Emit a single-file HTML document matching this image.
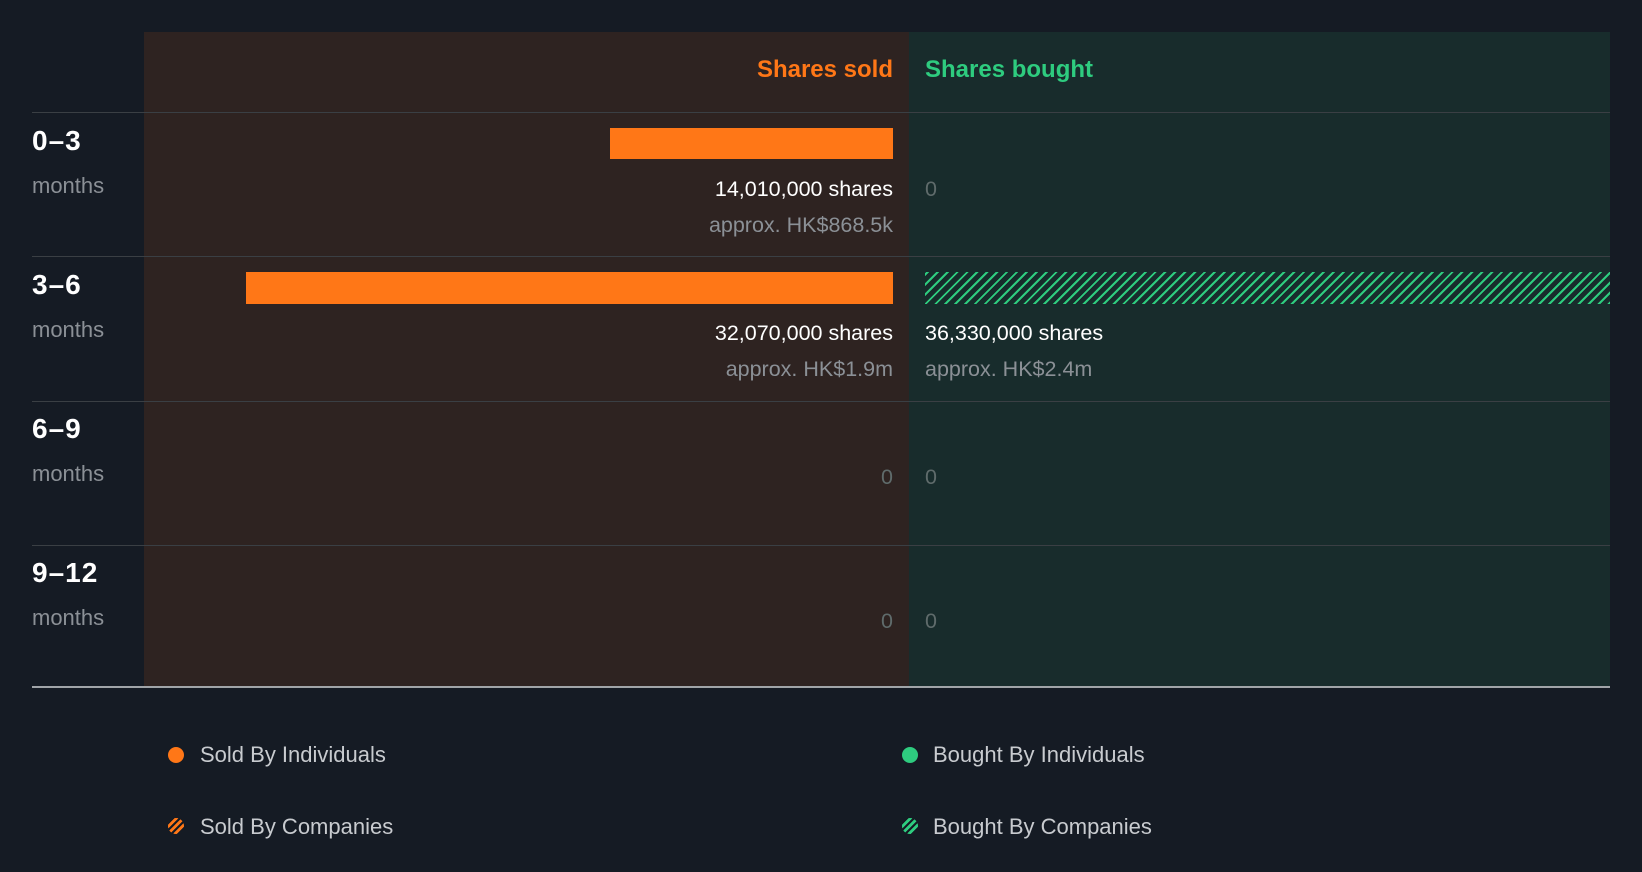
<!DOCTYPE html>
<html><head><meta charset="utf-8"><style>
*{margin:0;padding:0;box-sizing:border-box}
body{width:1642px;height:872px;background:#151b24;position:relative;overflow:hidden;font-family:"Liberation Sans",sans-serif}
.a{position:absolute;white-space:nowrap}
.pl{left:144px;width:765px;top:32px;height:655px;background:#2e2321}
.pr{left:909px;width:701px;top:32px;height:655px;background:#182c2c}
.ln{left:32px;width:1578px;height:1px;background:#3a3f44}
.r{text-align:right;right:749px}
.l{left:925px}
.hd{font-size:24px;font-weight:bold;top:56px}
.per{left:32px;font-size:28px;font-weight:bold;color:#fff;letter-spacing:1px}
.mo{left:32px;font-size:22px;color:#8b9096}
.sh{font-size:21.5px;color:#fff}
.ap{font-size:21.5px;color:#8b9096}
.z{font-size:21.5px;color:#5f6b6b}
.dot{width:16px;height:16px;border-radius:50%}
.lg{font-size:22px;color:#c8cbcf}
</style></head><body>
<div class="a pl"></div><div class="a pr"></div>
<div class="a hd r" style="color:#ff7717">Shares sold</div>
<div class="a hd l" style="color:#2ecc7f">Shares bought</div>
<div class="a ln" style="top:112px;left:32px"></div>
<div class="a ln" style="top:256px"></div>
<div class="a ln" style="top:401px"></div>
<div class="a ln" style="top:545px"></div>
<div class="a" style="left:32px;width:1578px;top:686px;height:2px;background:#a0a4a8"></div>

<div class="a per" style="top:125px">0–3</div><div class="a mo" style="top:173px">months</div>
<div class="a per" style="top:269px">3–6</div><div class="a mo" style="top:317px">months</div>
<div class="a per" style="top:413px">6–9</div><div class="a mo" style="top:461px">months</div>
<div class="a per" style="top:557px">9–12</div><div class="a mo" style="top:605px">months</div>

<div class="a" style="left:610px;width:283px;top:128px;height:31px;background:#ff7717"></div>
<div class="a sh r" style="top:177px">14,010,000 shares</div>
<div class="a ap r" style="top:213px">approx. HK$868.5k</div>
<div class="a z l" style="top:177px">0</div>

<div class="a" style="left:246px;width:647px;top:272px;height:32px;background:#ff7717"></div>
<div class="a" style="left:925px;width:685px;top:272px;height:32px;background:repeating-linear-gradient(-45deg,#2ecc7f 0 2px,transparent 2px 7px)"></div>
<div class="a sh r" style="top:321px">32,070,000 shares</div>
<div class="a ap r" style="top:357px">approx. HK$1.9m</div>
<div class="a sh l" style="top:321px">36,330,000 shares</div>
<div class="a ap l" style="top:357px">approx. HK$2.4m</div>

<div class="a z r" style="top:465px">0</div><div class="a z l" style="top:465px">0</div>
<div class="a z r" style="top:609px">0</div><div class="a z l" style="top:609px">0</div>

<div class="a dot" style="left:168px;top:747px;background:#ff7717"></div>
<div class="a lg" style="left:200px;top:742px">Sold By Individuals</div>
<div class="a dot" style="left:902px;top:747px;background:#2ecc7f"></div>
<div class="a lg" style="left:933px;top:742px">Bought By Individuals</div>
<div class="a dot" style="left:168px;top:818px;background:repeating-linear-gradient(-45deg,#ff7717 0 3px,#151b24 3px 5px)"></div>
<div class="a lg" style="left:200px;top:814px">Sold By Companies</div>
<div class="a dot" style="left:902px;top:818px;background:repeating-linear-gradient(-45deg,#2ecc7f 0 3px,#151b24 3px 5px)"></div>
<div class="a lg" style="left:933px;top:814px">Bought By Companies</div>
</body></html>
